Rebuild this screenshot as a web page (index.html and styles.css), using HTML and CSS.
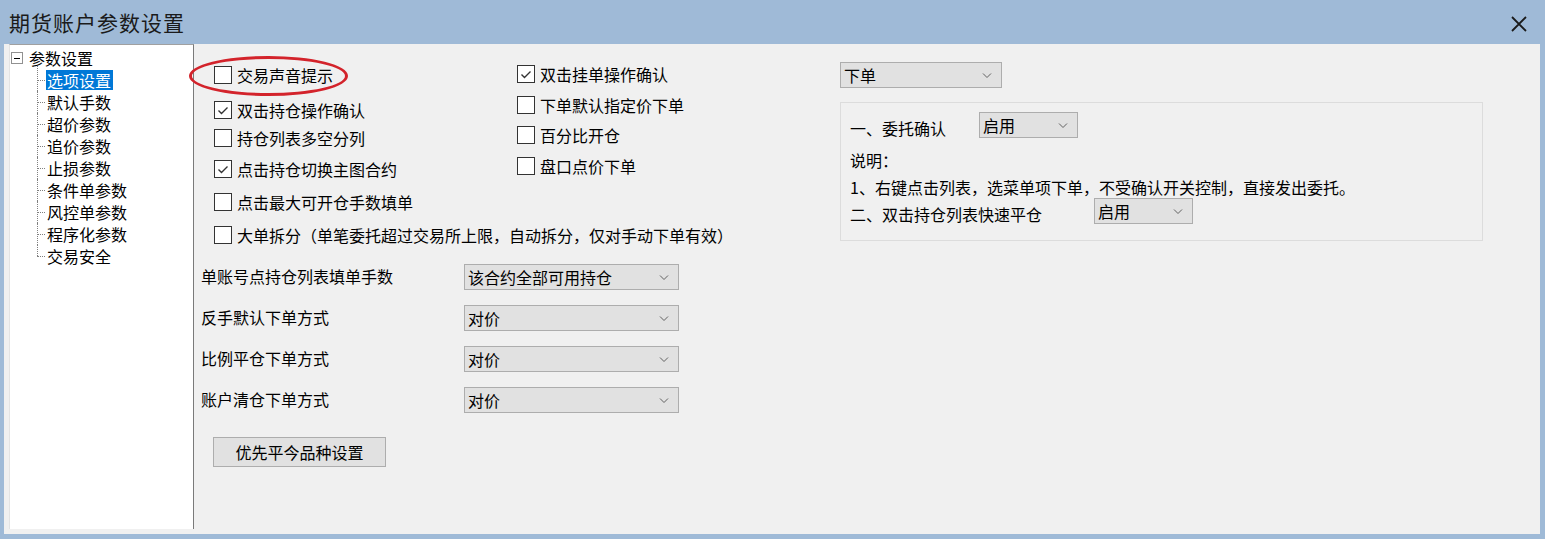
FILE: index.html
```html
<!DOCTYPE html>
<html>

<head>
<meta charset="utf-8">
<link rel="stylesheet" href="styles.css">
</head>

<body>
    <div class="window">
        <div class="titlebar">
            <div class="title">期货账户参数设置</div>
            <div class="close">
                <svg width="16" height="16" viewBox="0 0 16 16"><path d="M1 1 L15 15 M15 1 L1 15" stroke="#1a1a1a" stroke-width="1.8" fill="none"/></svg>
            </div>
        </div>

        <div class="client">
            <div class="tree">
                <div class="tree-root"><span class="expander"><span class="minus"></span></span>参数设置</div>
                <div class="tree-children">
                    <div class="tree-item"><span class="selected">选项设置</span></div>
                    <div class="tree-item"><span>默认手数</span></div>
                    <div class="tree-item"><span>超价参数</span></div>
                    <div class="tree-item"><span>追价参数</span></div>
                    <div class="tree-item"><span>止损参数</span></div>
                    <div class="tree-item"><span>条件单参数</span></div>
                    <div class="tree-item"><span>风控单参数</span></div>
                    <div class="tree-item"><span>程序化参数</span></div>
                    <div class="tree-item"><span>交易安全</span></div>
                </div>
            </div>

            <div class="panel">
                <div class="options">
                    <div class="col-left">
                        <div class="check"><span class="box"></span>交易声音提示</div>
                        <div class="check"><span class="box checked"><svg width="16" height="16" viewBox="0 0 16 16"><path d="M3.5 8.5 L6.5 11.5 L12.5 5.5" stroke="#333" stroke-width="1.4" fill="none"/></svg></span>双击持仓操作确认</div>
                        <div class="check"><span class="box"></span>持仓列表多空分列</div>
                        <div class="check"><span class="box checked"><svg width="16" height="16" viewBox="0 0 16 16"><path d="M3.5 8.5 L6.5 11.5 L12.5 5.5" stroke="#333" stroke-width="1.4" fill="none"/></svg></span>点击持仓切换主图合约</div>
                        <div class="check"><span class="box"></span>点击最大可开仓手数填单</div>
                        <div class="check"><span class="box"></span>大单拆分（单笔委托超过交易所上限，自动拆分，仅对手动下单有效）</div>
                    </div>

                    <div class="col-mid">
                        <div class="check"><span class="box checked"><svg width="16" height="16" viewBox="0 0 16 16"><path d="M3.5 8.5 L6.5 11.5 L12.5 5.5" stroke="#333" stroke-width="1.4" fill="none"/></svg></span>双击挂单操作确认</div>
                        <div class="check"><span class="box"></span>下单默认指定价下单</div>
                        <div class="check"><span class="box"></span>百分比开仓</div>
                        <div class="check"><span class="box"></span>盘口点价下单</div>
                    </div>

                    <div class="col-right">
                        <div class="select select-order">下单<svg class="chevron" width="10" height="6" viewBox="0 0 10 6"><path d="M1 0.5 L5 4.5 L9 0.5" stroke="#606060" stroke-width="1" fill="none"/></svg></div>
                        <div class="group">
                            <div class="group-row">
                                <div class="group-label first">一、委托确认</div>
                                <div class="select select-small">启用<svg class="chevron" width="10" height="6" viewBox="0 0 10 6"><path d="M1 0.5 L5 4.5 L9 0.5" stroke="#606060" stroke-width="1" fill="none"/></svg></div>
                            </div>
                            <div class="note note-title">说明：</div>
                            <div class="note">1、右键点击列表，选菜单项下单，不受确认开关控制，直接发出委托。</div>
                            <div class="group-row last">
                                <div class="group-label second">二、双击持仓列表快速平仓</div>
                                <div class="select select-small">启用<svg class="chevron" width="10" height="6" viewBox="0 0 10 6"><path d="M1 0.5 L5 4.5 L9 0.5" stroke="#606060" stroke-width="1" fill="none"/></svg></div>
                            </div>
                        </div>
                    </div>
                </div>

                <div class="settings">
                    <div class="setting-row">
                        <div class="setting-label">单账号点持仓列表填单手数</div>
                        <div class="select select-wide">该合约全部可用持仓<svg class="chevron" width="10" height="6" viewBox="0 0 10 6"><path d="M1 0.5 L5 4.5 L9 0.5" stroke="#606060" stroke-width="1" fill="none"/></svg></div>
                    </div>
                    <div class="setting-row">
                        <div class="setting-label">反手默认下单方式</div>
                        <div class="select select-wide">对价<svg class="chevron" width="10" height="6" viewBox="0 0 10 6"><path d="M1 0.5 L5 4.5 L9 0.5" stroke="#606060" stroke-width="1" fill="none"/></svg></div>
                    </div>
                    <div class="setting-row">
                        <div class="setting-label">比例平仓下单方式</div>
                        <div class="select select-wide">对价<svg class="chevron" width="10" height="6" viewBox="0 0 10 6"><path d="M1 0.5 L5 4.5 L9 0.5" stroke="#606060" stroke-width="1" fill="none"/></svg></div>
                    </div>
                    <div class="setting-row">
                        <div class="setting-label">账户清仓下单方式</div>
                        <div class="select select-wide">对价<svg class="chevron" width="10" height="6" viewBox="0 0 10 6"><path d="M1 0.5 L5 4.5 L9 0.5" stroke="#606060" stroke-width="1" fill="none"/></svg></div>
                    </div>
                </div>

                <div class="button">优先平今品种设置</div>
            </div>
        </div>

        <div class="mark"></div>
    </div>
</body>

</html>
```

FILE: styles.css
```css
body {
    margin: 0;
    background-color: #9fbad7;
    font-family: "Noto Sans CJK SC", "Microsoft YaHei", sans-serif;
    font-size: 16px;
    line-height: 20px;
    color: #000;
}

.window {
    position: relative;
    width: 1545px;
    height: 539px;
    display: flex;
    flex-direction: column;
}

.titlebar {
    height: 44px;
    display: flex;
    align-items: center;
    justify-content: space-between;
    padding: 0 18px 0 9px;
}

.title {
    font-size: 21px;
    line-height: 28px;
    letter-spacing: 1px;
    color: #1b1b1b;
}

.close {
    width: 16px;
    height: 16px;
    margin-top: 4px;
}

.close svg {
    display: block;
}

.client {
    flex: 1;
    display: flex;
    margin: 0 5px 5px 4px;
    padding: 0 0 5px 5px;
    background-color: #f0f0f0;
}

/* tree */
.tree {
    width: 183px;
    padding-top: 3px;
    background-color: #fff;
    border-top: 1px solid #a0a0a0;
    border-left: 1px solid #e3e3e3;
    border-right: 1px solid #7a7a7a;
}

.tree-root {
    display: flex;
    align-items: center;
    height: 20px;
}

.expander {
    width: 10px;
    height: 10px;
    margin: 0 6px 0 1px;
    border: 1px solid #919191;
    display: flex;
    align-items: center;
    justify-content: center;
}

.minus {
    width: 6px;
    height: 1px;
    background-color: #000;
}

.tree-children {
    margin: 1px 0 0 27px;
}

.tree-item {
    position: relative;
    height: 22px;
    padding-left: 9px;
}

.tree-item span {
    display: inline-block;
    margin-top: 1px;
    padding: 0 2px 0 1px;
    line-height: 20px;
}

.tree-item .selected {
    background-color: #0078d7;
    color: #fff;
}

.tree-item::before {
    content: "";
    position: absolute;
    left: 0;
    top: 11px;
    width: 8px;
    border-top: 1px dotted #808080;
}

.tree-item::after {
    content: "";
    position: absolute;
    left: 0;
    top: 0;
    height: 22px;
    border-left: 1px dotted #808080;
}

.tree-item:first-child::after {
    top: -3px;
    height: 25px;
}

.tree-item:last-child::after {
    height: 11px;
}

/* panel */
.panel {
    flex: 1;
    padding-left: 7px;
}

.options {
    display: flex;
    height: 201px;
}

.col-left {
    width: 303px;
    margin-left: 13px;
    padding-top: 21px;
}

.col-left .check:nth-child(2) { margin-top: 15px; }
.col-left .check:nth-child(3) { margin-top: 8px; }
.col-left .check:nth-child(4) { margin-top: 11px; }
.col-left .check:nth-child(5) { margin-top: 13px; }
.col-left .check:nth-child(6) { margin-top: 13px; }

.col-mid {
    width: 323px;
    padding-top: 20px;
    display: flex;
    flex-direction: column;
    gap: 10.5px;
}

.check {
    display: flex;
    align-items: center;
    height: 20px;
    white-space: nowrap;
}

.box {
    width: 16px;
    height: 16px;
    margin-right: 5px;
    flex-shrink: 0;
    border: 1px solid #333;
    background-color: #fff;
}

.box svg {
    display: block;
}

.col-right {
    width: 643px;
    padding-top: 18px;
}

.select {
    position: relative;
    box-sizing: border-box;
    height: 26px;
    padding-left: 3px;
    line-height: 24px;
    background-color: #e1e1e1;
    border: 1px solid #adadad;
    white-space: nowrap;
}

.chevron {
    position: absolute;
    right: 9px;
    top: 10px;
}

.select-order {
    width: 162px;
}

.select-small {
    width: 99px;
}

.select-wide {
    width: 215px;
}

.group {
    box-sizing: border-box;
    height: 139px;
    margin-top: 14px;
    padding: 9px 9px 0 9px;
    border: 1px solid #dcdcdc;
}

.group-row {
    display: flex;
    align-items: center;
}

.group-label {
    padding-top: 6px;
    white-space: nowrap;
}

.group-label.first {
    width: 129px;
}

.group-label.second {
    width: 244px;
    padding-top: 5px;
}

.note {
    margin-top: 7px;
    white-space: nowrap;
}

.note-title {
    margin-top: 12px;
}

.group-row.last {
    margin-top: 1px;
}

.settings {
    margin-top: 19px;
    display: flex;
    flex-direction: column;
    gap: 15px;
}

.setting-row {
    display: flex;
    align-items: center;
    height: 26px;
}

.setting-label {
    width: 263px;
    margin-top: -3px;
}

.button {
    box-sizing: border-box;
    width: 173px;
    height: 30px;
    margin: 24px 0 0 12px;
    line-height: 28px;
    text-align: center;
    background-color: #e1e1e1;
    border: 1px solid #adadad;
}

/* red annotation ring */
.mark {
    position: absolute;
    left: 189px;
    top: 56px;
    width: 159px;
    height: 40px;
    box-sizing: border-box;
    border: 3px solid #d3232b;
    border-radius: 50%;
}
```
